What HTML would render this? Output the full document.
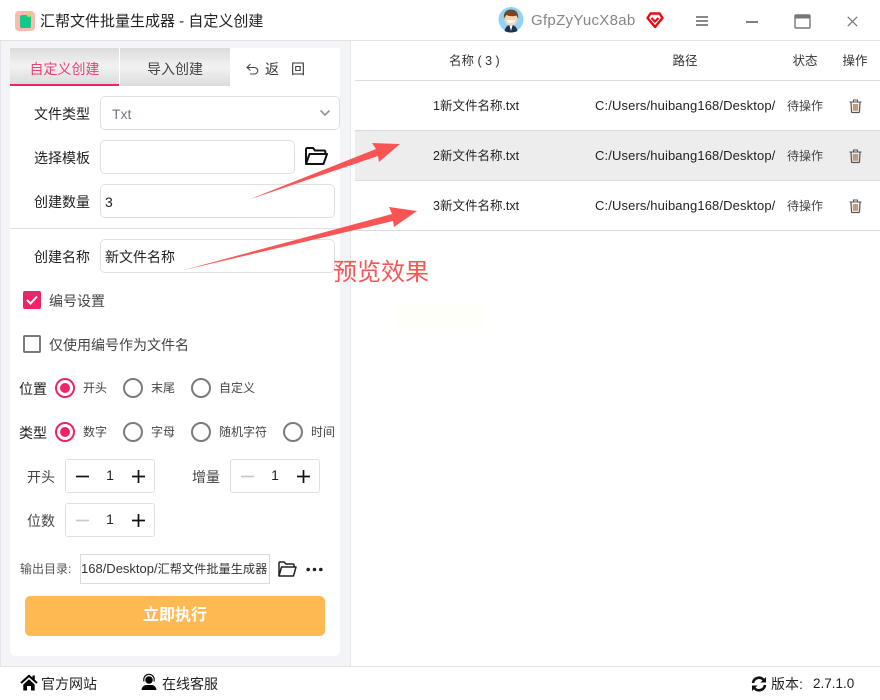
<!DOCTYPE html>
<html lang="zh-CN">
<head>
<meta charset="utf-8">
<style>
html,body{margin:0;padding:0;background:#fff;}
#app{position:relative;width:880px;height:700px;overflow:hidden;background:#fff;font-family:"Liberation Sans","Noto Sans CJK SC",sans-serif;color:#222;}
#app div,#app span.t{position:absolute;box-sizing:border-box;}
.t{white-space:nowrap;line-height:20px;height:20px;font-size:14px;}
.c{text-align:center;}
.box{background:#fff;border:1px solid #e0e0e3;border-radius:5px;}
.rad{width:20px;height:20px;border:2px solid #7b7b7b;border-radius:50%;background:#fff;}
.rad.on{border-color:#ee2467;}
.rad.on:after{content:"";position:absolute;left:3px;top:3px;width:10px;height:10px;border-radius:50%;background:#ee2467;}
.line{background:#dcdcdc;height:1px;left:355px;width:525px;}
.p{width:181px;overflow:hidden;font-size:13px;letter-spacing:.12px;left:595px;}
svg{position:absolute;overflow:visible;}
</style>
</head>
<body>
<div id="app">
  <!-- Title bar -->
  <div style="left:15px;top:11px;width:20px;height:20px;border-radius:4px;background:#fdb9ad;"></div>
  <div style="left:20px;top:15px;width:11px;height:13px;border-radius:2px;background:#12c98b;"></div>
  <div style="left:27px;top:13px;width:4px;height:4px;border-radius:50%;background:#b7e84f;"></div>
  <span class="t" style="left:40px;top:12px;font-size:15px;color:#222;">汇帮文件批量生成器 - 自定义创建</span>

  <svg style="left:498px;top:7px;" width="26" height="26" viewBox="0 0 26 26">
    <circle cx="13" cy="12.500" r="12.500" fill="#8fd4f7"/>
    <path d="M6.500 24c1-4.500 3.500-6 6.500-6s5.500 1.500 6.500 6c-2 1-4 1.500-6.500 1.500S8.500 25 6.500 24z" fill="#1f3350"/>
    <path d="M11.500 18.500h3L13 24z" fill="#fff"/>
    <circle cx="13" cy="12" r="6.500" fill="#fbd3b0"/>
    <path d="M6 11.500C5 5 9 2.500 13 2.500S21 5 20 11.500L18.500 8.500C16 9.500 11 9.500 8.500 8 7.700 9 7 10 6 11.500z" fill="#7a4426"/>
    <path d="M8.800 13h8.400c-.5 4-7.900 4-8.400 0z" fill="#fff"/>
  </svg>
  <span class="t" style="left:531px;top:11px;font-size:15px;color:#868686;letter-spacing:.3px;">GfpZyYucX8ab</span>
  <svg style="left:646px;top:12px;" width="18" height="17" viewBox="0 0 18 17">
    <path d="M4.500 1.500h9L16.500 6 9 15 1.500 6z" fill="#fff" stroke="#f4050f" stroke-width="2.400" stroke-linejoin="round"/>
    <path d="M5.500 6L9 9.500 12.500 6" fill="none" stroke="#f4050f" stroke-width="2.200"/>
  </svg>
  <svg style="left:696px;top:16px;" width="12" height="10" viewBox="0 0 12 10"><path d="M0 1h12M0 5h12M0 9h12" stroke="#777" stroke-width="1.800"/></svg>
  <div style="left:746px;top:21px;width:12px;height:2px;background:#808080;"></div>
  <svg style="left:794px;top:14px;" width="17" height="15" viewBox="0 0 17 15"><rect x="1" y="1" width="15" height="13" rx="1" fill="none" stroke="#777" stroke-width="1.400"/><rect x="1" y="1" width="15" height="3.500" fill="#777"/></svg>
  <svg style="left:847px;top:16px;" width="11" height="11" viewBox="0 0 11 11"><path d="M.8.800l9.400 9.400M10.200.800L.8 10.200" stroke="#777" stroke-width="1.200"/></svg>

  <div style="left:0;top:40px;width:880px;height:1px;background:#e3e3e3;"></div>

  <!-- Left panel -->
  <div style="left:0;top:41px;width:351px;height:625px;background:#f3f4f7;border-right:1px solid #e6e6e8;border-left:1px solid #e6e6e8;"></div>
  <div style="left:10px;top:48px;width:330px;height:608px;background:#fff;border-radius:0 0 6px 6px;"></div>

  <!-- Tabs -->
  <div style="left:10px;top:48px;width:109px;height:38px;background:linear-gradient(#dcdcdc,#f2f2f2 50%,#dcdcdc);border-bottom:2px solid #ee2467;"></div>
  <div style="left:120px;top:48px;width:110px;height:38px;background:linear-gradient(#dcdcdc,#f2f2f2 50%,#dcdcdc);"></div>
  <span class="t c" style="left:10px;top:59px;width:109px;color:#ee3f73;">自定义创建</span>
  <span class="t c" style="left:120px;top:59px;width:110px;color:#444;">导入创建</span>
  <svg style="left:246px;top:63px;" width="14" height="12" viewBox="0 0 14 12"><path d="M4.500 1L1 4.500 4.500 7.500M1 4.500h7.500a3 3 0 010 6.500H4" fill="none" stroke="#444" stroke-width="1.100"/></svg>
  <span class="t" style="left:265px;top:59px;color:#333;letter-spacing:12px;">返回</span>

  <!-- Form -->
  <span class="t" style="left:34px;top:104px;">文件类型</span>
  <div class="box" style="left:100px;top:96px;width:240px;height:34px;"></div>
  <span class="t" style="left:112px;top:104px;color:#6c7685;">Txt</span>
  <svg style="left:319px;top:109px;" width="12" height="8" viewBox="0 0 12 8"><path d="M1.500 1.500L6 6l4.500-4.500" fill="none" stroke="#999" stroke-width="1.800"/></svg>

  <span class="t" style="left:34px;top:148px;">选择模板</span>
  <div class="box" style="left:100px;top:140px;width:195px;height:34px;"></div>
  <svg style="left:304px;top:146px;" width="24" height="20" viewBox="0 0 24 20">
    <path d="M2 18V3.500C2 2.500 2.500 2 3.500 2H9l2 2.500h9c.8 0 1.300.5 1.300 1.300V8" fill="none" stroke="#111" stroke-width="2"/>
    <path d="M2 18L5.500 8H23l-3.500 10z" fill="none" stroke="#111" stroke-width="2" stroke-linejoin="round"/>
  </svg>

  <span class="t" style="left:34px;top:192px;">创建数量</span>
  <div class="box" style="left:100px;top:184px;width:235px;height:34px;"></div>
  <span class="t" style="left:105px;top:192px;">3</span>

  <div style="left:10px;top:228px;width:330px;height:1px;background:#e0e0e0;"></div>

  <span class="t" style="left:34px;top:247px;">创建名称</span>
  <div class="box" style="left:100px;top:239px;width:235px;height:34px;"></div>
  <span class="t" style="left:105px;top:247px;">新文件名称</span>

  <div style="left:23px;top:291px;width:18px;height:18px;background:#ee2467;border-radius:2px;"></div>
  <svg style="left:23px;top:291px;" width="18" height="18" viewBox="0 0 18 18"><path d="M4 9l3.500 3.500L14 5.500" fill="none" stroke="#fff" stroke-width="2"/></svg>
  <span class="t" style="left:49px;top:291px;color:#444;">编号设置</span>

  <div style="left:23px;top:335px;width:18px;height:18px;background:#fff;border:2px solid #7b7b7b;border-radius:2px;"></div>
  <span class="t" style="left:49px;top:335px;color:#444;">仅使用编号作为文件名</span>

  <span class="t" style="left:19px;top:379px;">位置</span>
  <div class="rad on" style="left:55px;top:378px;"></div>
  <span class="t" style="left:83px;top:378px;font-size:12px;color:#444;">开头</span>
  <div class="rad" style="left:123px;top:378px;"></div>
  <span class="t" style="left:151px;top:378px;font-size:12px;color:#444;">末尾</span>
  <div class="rad" style="left:191px;top:378px;"></div>
  <span class="t" style="left:219px;top:378px;font-size:12px;color:#444;">自定义</span>

  <span class="t" style="left:19px;top:423px;">类型</span>
  <div class="rad on" style="left:55px;top:422px;"></div>
  <span class="t" style="left:83px;top:422px;font-size:12px;color:#444;">数字</span>
  <div class="rad" style="left:123px;top:422px;"></div>
  <span class="t" style="left:151px;top:422px;font-size:12px;color:#444;">字母</span>
  <div class="rad" style="left:191px;top:422px;"></div>
  <span class="t" style="left:219px;top:422px;font-size:12px;color:#444;">随机字符</span>
  <div class="rad" style="left:283px;top:422px;"></div>
  <span class="t" style="left:311px;top:422px;font-size:12px;color:#444;">时间</span>

  <!-- Steppers -->
  <span class="t" style="left:27px;top:467px;color:#444;">开头</span>
  <div class="box" style="left:65px;top:459px;width:90px;height:34px;border-radius:3px;"></div>
  <svg style="left:76px;top:470px;" width="13" height="13" viewBox="0 0 13 13"><path d="M0 6.500h13" stroke="#111" stroke-width="1.700"/></svg>
  <span class="t c" style="left:100px;top:465px;width:20px;">1</span>
  <svg style="left:132px;top:470px;" width="13" height="13" viewBox="0 0 13 13"><path d="M0 6.500h13M6.500 0v13" stroke="#111" stroke-width="1.700"/></svg>

  <span class="t" style="left:192px;top:467px;color:#444;">增量</span>
  <div class="box" style="left:230px;top:459px;width:90px;height:34px;border-radius:3px;"></div>
  <svg style="left:241px;top:470px;" width="13" height="13" viewBox="0 0 13 13"><path d="M0 6.500h13" stroke="#c8c8c8" stroke-width="1.700"/></svg>
  <span class="t c" style="left:265px;top:465px;width:20px;">1</span>
  <svg style="left:297px;top:470px;" width="13" height="13" viewBox="0 0 13 13"><path d="M0 6.500h13M6.500 0v13" stroke="#111" stroke-width="1.700"/></svg>

  <span class="t" style="left:27px;top:511px;color:#444;">位数</span>
  <div class="box" style="left:65px;top:503px;width:90px;height:34px;border-radius:3px;"></div>
  <svg style="left:76px;top:514px;" width="13" height="13" viewBox="0 0 13 13"><path d="M0 6.500h13" stroke="#c8c8c8" stroke-width="1.700"/></svg>
  <span class="t c" style="left:100px;top:509px;width:20px;">1</span>
  <svg style="left:132px;top:514px;" width="13" height="13" viewBox="0 0 13 13"><path d="M0 6.500h13M6.500 0v13" stroke="#111" stroke-width="1.700"/></svg>

  <!-- Output -->
  <span class="t" style="left:20px;top:559px;font-size:12px;color:#555;">输出目录:</span>
  <div style="left:80px;top:554px;width:190px;height:30px;background:#fff;border:1px solid #dcdcdc;"></div>
  <span class="t" style="left:81px;top:559px;width:187px;overflow:hidden;font-size:13px;color:#333;">168/Desktop/<span style="font-size:12.200px;">汇帮文件批量生成器</span></span>
  <svg style="left:278px;top:561px;" width="19" height="16" viewBox="0 0 19 16">
    <path d="M1 15V2c0-.6.400-1 1-1h4l2 2h7c.6 0 1 .4 1 1v2" fill="none" stroke="#222" stroke-width="1.500"/>
    <path d="M1 15L3.500 6H18l-2.500 9z" fill="none" stroke="#222" stroke-width="1.500" stroke-linejoin="round"/>
  </svg>
  <svg style="left:306px;top:567px;" width="17" height="5" viewBox="0 0 17 5"><circle cx="2.200" cy="2.500" r="1.800" fill="#222"/><circle cx="8.500" cy="2.500" r="1.800" fill="#222"/><circle cx="14.800" cy="2.500" r="1.800" fill="#222"/></svg>

  <div style="left:25px;top:596px;width:300px;height:40px;background:#ffb952;border-radius:5px;"></div>
  <span class="t c" style="left:25px;top:606px;width:300px;font-size:16px;font-weight:bold;color:#fff;">立即执行</span>

  <!-- Table -->
  <span class="t" style="left:449px;top:51px;font-size:12.500px;color:#333;">名称 ( 3 )</span>
  <span class="t c" style="left:645px;top:51px;width:80px;font-size:12.500px;color:#333;">路径</span>
  <span class="t c" style="left:785px;top:51px;width:40px;font-size:12.500px;color:#333;">状态</span>
  <span class="t c" style="left:835px;top:51px;width:40px;font-size:12.500px;color:#333;">操作</span>
  <div class="line" style="top:80px;"></div>
  <div style="left:355px;top:131px;width:525px;height:49px;background:#ededed;"></div>
  <div class="line" style="top:130px;"></div>
  <div class="line" style="top:180px;"></div>
  <div class="line" style="top:230px;"></div>

  <span class="t" style="left:433px;top:96px;font-size:12.500px;">1新文件名称.txt</span>
  <span class="t" style="left:433px;top:146px;font-size:12.500px;">2新文件名称.txt</span>
  <span class="t" style="left:433px;top:196px;font-size:12.500px;">3新文件名称.txt</span>

  <span class="t p" style="top:96px;">C:/Users/huibang168/Desktop/</span>
  <span class="t p" style="top:146px;">C:/Users/huibang168/Desktop/</span>
  <span class="t p" style="top:196px;">C:/Users/huibang168/Desktop/</span>

  <span class="t" style="left:787px;top:96px;font-size:12px;color:#444;">待操作</span>
  <span class="t" style="left:787px;top:146px;font-size:12px;color:#444;">待操作</span>
  <span class="t" style="left:787px;top:196px;font-size:12px;color:#444;">待操作</span>

  <svg style="left:849px;top:99px;" width="13" height="14" viewBox="0 0 13 14"><path d="M.5 3h12M4.500 3V1h4v2" fill="none" stroke="#555" stroke-width="1"/><path d="M2 3.500l.5 9c0 .5.400 1 1 1h6c.6 0 1-.5 1-1l.5-9" fill="none" stroke="#555" stroke-width="1.200"/><rect x="3.800" y="5" width="1.800" height="6.800" fill="#d8935a"/><rect x="5.600" y="5" width="1.800" height="6.800" fill="#8fa3b5"/><rect x="7.400" y="5" width="1.800" height="6.800" fill="#d8935a"/></svg>
  <svg style="left:849px;top:149px;" width="13" height="14" viewBox="0 0 13 14"><path d="M.5 3h12M4.500 3V1h4v2" fill="none" stroke="#555" stroke-width="1"/><path d="M2 3.500l.5 9c0 .5.400 1 1 1h6c.6 0 1-.5 1-1l.5-9" fill="none" stroke="#555" stroke-width="1.200"/><rect x="3.800" y="5" width="1.800" height="6.800" fill="#d8935a"/><rect x="5.600" y="5" width="1.800" height="6.800" fill="#8fa3b5"/><rect x="7.400" y="5" width="1.800" height="6.800" fill="#d8935a"/></svg>
  <svg style="left:849px;top:199px;" width="13" height="14" viewBox="0 0 13 14"><path d="M.5 3h12M4.500 3V1h4v2" fill="none" stroke="#555" stroke-width="1"/><path d="M2 3.500l.5 9c0 .5.400 1 1 1h6c.6 0 1-.5 1-1l.5-9" fill="none" stroke="#555" stroke-width="1.200"/><rect x="3.800" y="5" width="1.800" height="6.800" fill="#d8935a"/><rect x="5.600" y="5" width="1.800" height="6.800" fill="#8fa3b5"/><rect x="7.400" y="5" width="1.800" height="6.800" fill="#d8935a"/></svg>

  <!-- Annotations -->
  <svg style="left:0;top:0;" width="880" height="700" viewBox="0 0 880 700">
    <path d="M249 199.500L376 149 372 143 400 144 379 162 378 156z" fill="#fb5455"/>
    <path d="M182 270.500L392 214 389 207 417 211 394 227 393 221z" fill="#fb5455"/>
  </svg>
  <span class="t" style="left:333px;top:258px;height:30px;line-height:30px;font-size:24px;color:#fb5455;">预览效果</span>
  <div style="left:396px;top:304px;width:88px;height:26px;background:#fffffa;"></div>

  <!-- Footer -->
  <div style="left:0;top:666px;width:880px;height:1px;background:#e3e3e3;"></div>
  <svg style="left:20px;top:674px;" width="18" height="17" viewBox="0 0 18 17"><path d="M9 .500L.3 8.300 1.700 9.800 9 3.300l7.300 6.500 1.400-1.500L14.800 5.700V1.500h-2.300v2.100z" fill="#000"/><path d="M3.300 10.500L9 5.300l5.700 5.200v6H11V12H7v4.500H3.300z" fill="#000"/></svg>
  <span class="t" style="left:41px;top:674px;color:#222;">官方网站</span>
  <svg style="left:141px;top:674px;" width="16" height="16" viewBox="0 0 16 16"><circle cx="8" cy="6" r="3.800" fill="#000"/><path d="M2.800 7.500V5.500a5.200 5.200 0 0110.400 0v2" fill="none" stroke="#000" stroke-width="1.100"/><path d="M.5 16c.3-3 2.500-5 5-5h5c2.500 0 4.700 2 5 5z" fill="#000"/></svg>
  <span class="t" style="left:162px;top:674px;color:#222;">在线客服</span>
  <svg style="left:751px;top:676px;" width="16" height="16" viewBox="0 0 16 16"><path d="M2 7a6 6 0 0110.500-3.200" fill="none" stroke="#111" stroke-width="2.600"/><path d="M15 1v5.500H9.500z" fill="#111"/><path d="M14 9A6 6 0 013.500 12.200" fill="none" stroke="#111" stroke-width="2.600"/><path d="M1 15V9.500h5.500z" fill="#111"/></svg>
  <span class="t" style="left:771px;top:674px;color:#222;">版本:</span>
  <span class="t" style="left:813px;top:674px;font-size:13.500px;color:#222;">2.7.1.0</span>
</div>
</body>
</html>
